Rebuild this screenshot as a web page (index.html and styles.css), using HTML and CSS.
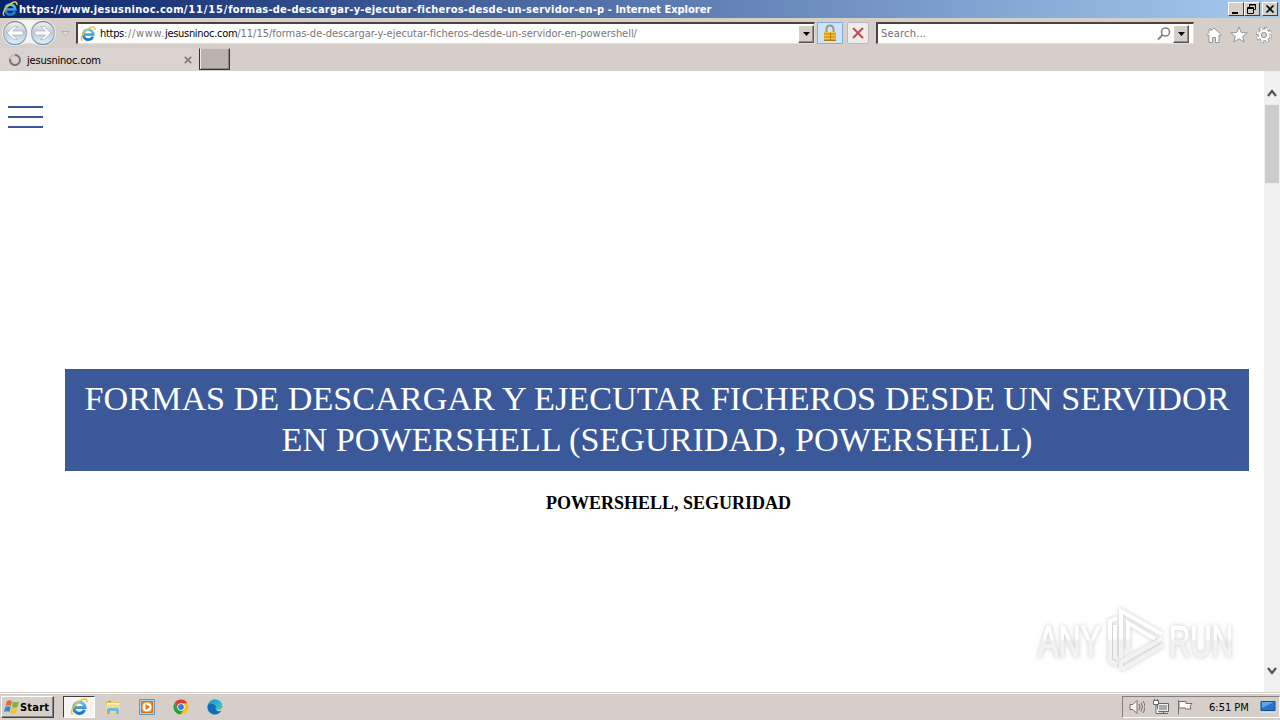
FILE: index.html
```html
<!DOCTYPE html>
<html lang="es">
<head>
    <meta charset="UTF-8">
    <title>jesusninoc.com</title>
    <link rel="stylesheet" href="styles.css">
</head>
<body>
    <svg class="defs" width="0" height="0">
        <defs>
            <linearGradient id="blue" x1="0" y1="0" x2="0" y2="1">
                <stop offset="0" stop-color="#62c5f2"/>
                <stop offset="1" stop-color="#1877c4"/>
            </linearGradient>
            <linearGradient id="ring" x1="0" y1="0" x2="0" y2="1">
                <stop offset="0" stop-color="#8b8f94"/>
                <stop offset="0.55" stop-color="#a9b6c2"/>
                <stop offset="1" stop-color="#6d9cbb"/>
            </linearGradient>
            <linearGradient id="orb" x1="0" y1="0" x2="0" y2="1">
                <stop offset="0" stop-color="#f4f4f5"/>
                <stop offset="0.5" stop-color="#bfcad6"/>
                <stop offset="1" stop-color="#e0f4fc"/>
            </linearGradient>
            <linearGradient id="edge" x1="0" y1="0" x2="1" y2="1">
                <stop offset="0" stop-color="#1c8fd0"/>
                <stop offset="0.5" stop-color="#2cb5d4"/>
                <stop offset="1" stop-color="#63d65b"/>
            </linearGradient>
            <linearGradient id="fade" gradientUnits="userSpaceOnUse" x1="0" y1="8" x2="0" y2="66">
                <stop offset="0" stop-color="#fff"/>
                <stop offset="0.5" stop-color="#fff"/>
                <stop offset="0.56" stop-color="#f1f1f1"/>
                <stop offset="1" stop-color="#f3f3f3"/>
            </linearGradient>
            <symbol id="ie" viewBox="0 0 16 16">
                <path d="M12.9 10.6A5 5 0 1 1 13.3 8.5H4" fill="none" stroke="url(#blue)" stroke-width="2.7"/>
                <path d="M2.4 14.8C-.6 12.6 3 6.5 8.2 3.1 12-.1 15.3.3 15 4" fill="none" stroke="#f1c232" stroke-width="1.4"/>
            </symbol>
        </defs>
    </svg>

    <header class="titlebar">
        <svg class="icon16" viewBox="0 0 16 16"><use href="#ie"/></svg>
        <span class="title"><span class="host">https://www.jesusninoc.com</span><span class="date">/11/15/</span><span class="slug">formas-de-descargar-y-ejecutar-ficheros-desde-un-servidor-en-p</span> - Internet Explorer</span>
        <div class="win-buttons">
            <span class="win-btn"><svg width="14" height="12"><path d="M3 9h6v2H3z"/></svg></span>
            <span class="win-btn"><svg width="14" height="12" fill="none" stroke="#000"><path d="M4.500 5V1.500h6v5H9M4 2h7M2.500 4.500h6v6h-6zM2 5.500h7"/></svg></span>
            <span class="win-btn close"><svg width="14" height="12"><path d="M3.500 2.500l7 7M10.500 2.500l-7 7" stroke="#000" stroke-width="1.700"/></svg></span>
        </div>
    </header>

    <div class="toolbar">
        <svg class="nav-buttons" width="76" height="30" viewBox="0 0 76 30">
            <path d="M15 2h28a13 13 0 0 1 0 26c-6 0-8-3-14-3s-8 3-14 3A13 13 0 0 1 15 2z" fill="#f4f4f4"/>
            <circle cx="15" cy="15" r="11.500" fill="url(#orb)" stroke="url(#ring)" stroke-width="1.400"/>
            <circle cx="43" cy="15" r="11.500" fill="url(#orb)" stroke="url(#ring)" stroke-width="1.400"/>
            <path d="M7 15l7-6.500h3.500L12.500 13H23v4H12.500l5 4.500H14z" fill="#fff" stroke="#a3b0bd" stroke-width=".7"/>
            <path d="M51 15l-7-6.500h-3.500l5 4.500H35v4h10.500l-5 4.500H44z" fill="#fff" stroke="#a3b0bd" stroke-width=".7"/>
            <path d="M61.500 13.500h8l-4 4z" fill="#e2dedb" stroke="#b4afab"/>
        </svg>
        <div class="field address">
            <svg class="icon16" viewBox="0 0 16 16"><use href="#ie"/></svg>
            <span class="url"><b>https</b><span class="www">://www.</span><b>jesusninoc.com</b><span class="path">/11/15/formas-de-descargar-y-ejecutar-ficheros-desde-un-servidor-en-powershell/</span></span>
            <span class="drop"><svg width="7" height="4"><path d="M0 0h7L3.500 4z"/></svg></span>
        </div>
        <div class="tool lock">
            <svg width="16" height="18" viewBox="0 0 16 18">
                <path d="M4.500 9V5a3.500 3.500 0 0 1 7 0v4" fill="none" stroke="#a3966c" stroke-width="2"/>
                <path d="M2 8h12v9H2z" fill="#e0a31c"/>
                <path d="M2 8.500h12M2 11.500h12M2 14.500h12" stroke="#efc440"/>
                <path d="M2 16.500h12M8.500 9v7" stroke="#b37a10"/>
            </svg>
        </div>
        <div class="tool stop">
            <svg width="12" height="12"><path d="M1 1l10 10M11 1L1 11" stroke="#c14a50" stroke-width="2"/></svg>
        </div>
        <div class="field search">
            <span class="placeholder">Search...</span>
            <svg width="14" height="14" viewBox="0 0 14 14" fill="none" stroke="#858585"><circle cx="8.500" cy="5" r="4" stroke-width="1.600"/><path d="M5.500 8L1 12.500" stroke-width="2"/></svg>
            <span class="drop"><svg width="7" height="4"><path d="M0 0h7L3.500 4z"/></svg></span>
        </div>
        <div class="commands">
            <svg width="18" height="18" viewBox="0 0 18 18"><path d="M9 2l7.500 7-1 1L14 9v7.500h-3.500v-5h-3v5H4V9l-1.500 1-1-1L4 6.500V3h2v1.700z" fill="#fff" stroke="#949494"/></svg>
            <svg width="18" height="18" viewBox="0 0 18 18"><path d="M9 1l2.300 5.500 6 .3-4.700 3.700L14.300 16 9 12.800 3.700 16l1.700-5.500L.7 6.800l6-.3z" fill="#fff" stroke="#949494"/></svg>
            <svg width="18" height="18" viewBox="0 0 18 18">
                <circle cx="9" cy="9" r="6.700" fill="none" stroke="#949494" stroke-width="3" stroke-dasharray="2.900 2.362"/>
                <circle cx="9" cy="9" r="6" fill="#fff" stroke="#949494"/>
                <circle cx="9" cy="9" r="6.500" fill="none" stroke="#fff" stroke-width="2" stroke-dasharray="1.900 3.205" stroke-dashoffset="-.5"/>
                <circle cx="9" cy="9" r="2.600" fill="#d8d2ce" stroke="#949494"/>
            </svg>
        </div>
    </div>

    <div class="tabs">
        <div class="tab">
            <svg width="14" height="14" viewBox="0 0 14 14" fill="none" stroke-width="2"><path d="M7 2a5 5 0 1 1-4.800 3.600" stroke="#777"/><path d="M2.200 5.600A5 5 0 0 1 7 2" stroke="#c4c0bd"/></svg>
            <span class="tab-title">jesusninoc.com</span>
            <svg width="8" height="8"><path d="M.8.8l6.400 6.400M7.200.8L.8 7.200" stroke="#858080" stroke-width="1.700"/></svg>
        </div>
        <div class="new-tab"></div>
    </div>

    <div class="viewport">
        <main>
            <div class="menu"><i></i><i></i><i></i></div>
            <h1>FORMAS DE DESCARGAR Y EJECUTAR FICHEROS DESDE UN SERVIDOR EN POWERSHELL (SEGURIDAD, POWERSHELL)</h1>
            <h3>POWERSHELL, SEGURIDAD</h3>
            <svg class="watermark" width="234" height="76" viewBox="0 0 234 76">
                <g class="mark">
                    <text x="8" y="56" textLength="63" lengthAdjust="spacingAndGlyphs">ANY</text>
                    <path d="M87 17l-7 3v40l7 4M85 24v34M91 57V10l41 23M98 50V22l27 16M91 61l41-23M96 66l37-22M91 61v6h5"/>
                    <text x="139" y="56" textLength="64" lengthAdjust="spacingAndGlyphs">RUN</text>
                </g>
            </svg>
        </main>
        <div class="scrollbar">
            <svg width="10" height="8"><path d="M1 7l4-5 4 5" fill="none" stroke="#555" stroke-width="2.200"/></svg>
            <div class="thumb"></div>
            <svg width="10" height="8"><path d="M1 1l4 5 4-5" fill="none" stroke="#555" stroke-width="2.200"/></svg>
        </div>
    </div>

    <footer class="taskbar">
        <div class="start">
            <svg width="16" height="16" viewBox="0 0 16 16">
                <path d="M3 2c2-1 3-1 5 0L7 7C5 6 4 6 1.500 7z" fill="#e76931"/>
                <path d="M9 2.500c2 1 4 1 6 0L13.500 8c-2 1-4 1-5.500 0z" fill="#79b843"/>
                <path d="M1.200 8c2-1 4-1 5.500 0L5.500 13c-2-1-3-1-5.500 0z" fill="#3688d0"/>
                <path d="M7.700 8.800c2 1 4 1 5.500 0L12 14c-2 1-4 1-5.500 0z" fill="#f5c12d"/>
            </svg>
            <span>Start</span>
        </div>
        <div class="launch active"><svg width="18" height="18" viewBox="0 0 16 16"><use href="#ie"/></svg></div>
        <div class="launch">
            <svg width="16" height="16" viewBox="0 0 16 16"><path d="M1 2h5l1 1h7v11H1z" fill="#e8c766"/><path d="M2 4h12v3H2z" fill="#fff0b3"/><path d="M3 2h3v1H3z" fill="#56b65a"/><path d="M1 6h14v8H1z" fill="#f3db86"/><path d="M2 15v-4q0-2 2-2h8q2 0 2 2v4h-3v-3H5v3z" fill="#72b9df"/></svg>
        </div>
        <div class="launch">
            <svg width="16" height="16" viewBox="0 0 16 16"><path d="M.5.5h15v15H.5z" fill="#b3d5ee" stroke="#5799c6"/><path d="M2.500 2.500h11v11h-11z" fill="#f28a1c" stroke="#d96d0b"/><circle cx="8" cy="8" r="4.600" fill="#fff"/><path d="M6.500 5l4.500 3-4.500 3z" fill="#e8720c"/></svg>
        </div>
        <div class="launch">
            <svg width="16" height="16" viewBox="0 0 16 16"><circle cx="8" cy="8" r="7.500" fill="#fbc116"/><path d="M1.500 4.200A7.500 7.500 0 0 1 14.500 4.300H8L4.700 9.800z" fill="#e33b2e"/><path d="M1.500 4.200A7.500 7.500 0 0 0 7.400 15.500L11.200 9.900 8 11.500 4.700 9.800z" fill="#27a04b"/><circle cx="8" cy="8" r="3.700" fill="#fff"/><circle cx="8" cy="8" r="2.900" fill="#3b78e7"/></svg>
        </div>
        <div class="launch">
            <svg width="16" height="16" viewBox="0 0 16 16"><path d="M.5 8a7.500 7.500 0 0 1 15-.5C15.500 10 13 11 10.500 10.500L8 15.500C3.500 15.500.5 12 .5 8z" fill="url(#edge)"/><path d="M.5 8C.5 5 4 4 7 5.500 9 6.500 9.300 8 8.500 9c-.5 3 3.500 4 6 2.500-2 3.500-5 4.500-8 3.900C3 14.500.5 11.500.5 8z" fill="#146bb5"/></svg>
        </div>
        <div class="tray">
            <svg width="16" height="16" viewBox="0 0 16 16" fill="none" stroke="#707070"><path d="M1 5.500h3l4-4v13l-4-4H1z" fill="#fff"/><path d="M10 5q2 3 0 6M12 3.500q3 4.500 0 9M14 2q4 6 0 12"/></svg>
            <svg width="16" height="16" viewBox="0 0 16 16" stroke="#666"><path d="M4.500 4.500h11v8h-11z" fill="#eee"/><path d="M6 6h8v5H6z" fill="#aaa" stroke="none"/><path d="M10.500 13v1.500M6 14.500h9" fill="none"/><path d="M.5 1.500h5v4h-5zM1.500 0v2M4.500 0v2M3 6v8.500h3" fill="#fff"/></svg>
            <svg width="16" height="16" viewBox="0 0 16 16" fill="#fff" stroke="#707070"><path d="M1.500 1v14.500M2 2.500h7v2h6l-2 2.500 1 3H8.500V9H2z"/></svg>
            <span class="clock">6:51 PM</span>
            <svg class="desktop" width="16" height="14" viewBox="0 0 16 14"><path d="M1 1.500h14v9H1z" fill="#2774cf" stroke="#174d91"/><path d="M2 2h12L2 8z" fill="#5aa8ee"/><path d="M1 12h14v1H1z" fill="#d7e1ec"/></svg>
        </div>
    </footer>
</body>
</html>
```
FILE: styles.css
```css
* {
    box-sizing: border-box;
}
body {
    margin: 0;
    width: 1280px;
    height: 720px;
    overflow: hidden;
    display: flex;
    flex-direction: column;
    background: #d6cfc9;
    font-family: "DejaVu Sans Condensed", "DejaVu Sans", sans-serif;
    font-size: 11px;
    color: #000;
}
svg {
    display: block;
    flex: none;
}
.defs {
    position: absolute;
}
.icon16 {
    width: 16px;
    height: 16px;
}
.titlebar {
    height: 18px;
    flex: none;
    display: flex;
    align-items: center;
    padding: 0 2px;
    background: linear-gradient(to right, #0a246a, #a6caf0);
    color: #fff;
}
.title {
    margin-left: 1px;
    font-weight: bold;
    white-space: nowrap;
}
.title .host {
    letter-spacing: 0.3px;
}
.title .date {
    letter-spacing: 0.85px;
}
.title .slug {
    letter-spacing: 0.24px;
}
.win-buttons {
    display: flex;
    margin-left: auto;
}
.win-btn {
    width: 16px;
    height: 14px;
    background: #d6cfc9;
    border: 1px solid;
    border-color: #fff #404040 #404040 #fff;
}
.win-btn.close {
    margin-left: 2px;
}
.toolbar {
    height: 30px;
    flex: none;
    display: flex;
    align-items: flex-start;
    border-top: 1px solid #d5d2c3;
}
.nav-buttons {
    margin-top: -1px;
}
.field {
    height: 22px;
    margin-top: 3px;
    display: flex;
    align-items: center;
    background: #fff;
    border: 1px solid;
    border-width: 2px 1px 1px 2px;
    border-color: #494243 #e5e0dc #e5e0dc #494243;
}
.address {
    width: 739px;
    padding-left: 2px;
}
.url {
    flex: 1;
    margin-left: 4px;
    color: #777;
    white-space: nowrap;
    letter-spacing: -0.3px;
}
.url b {
    font-weight: normal;
    color: #000;
}
.url .www {
    letter-spacing: 0.65px;
}
.url .path {
    letter-spacing: -0.03px;
}
.drop {
    width: 16px;
    height: 18px;
    display: flex;
    align-items: center;
    justify-content: center;
    background: #d6cfc9;
    border: 1px solid;
    border-color: #fff #555 #555 #fff;
    box-shadow: inset -1px -1px #96908c;
}
.tool {
    height: 22px;
    margin-top: 3px;
    display: flex;
    align-items: center;
    justify-content: center;
}
.lock {
    width: 26px;
    margin-left: 2px;
    background: #cce3fb;
    border: 1px solid #84acdd;
}
.stop {
    width: 22px;
    margin-left: 4px;
    background: #eeebeb;
    border: 1px solid #bcb8b8;
    border-radius: 2px;
}
.search {
    width: 318px;
    margin-left: 7px;
    padding-left: 3px;
    padding-right: 4px;
}
.placeholder {
    flex: 1;
    color: #707070;
    letter-spacing: 0.2px;
}
.search .drop {
    margin-left: 2px;
}
.commands {
    display: flex;
    gap: 7px;
    margin: 7px 0 0 11px;
}
.tabs {
    height: 23px;
    flex: none;
    display: flex;
}
.tab {
    width: 199px;
    display: flex;
    align-items: center;
    padding: 1px 7px 0 8px;
    background: #d9d2ce;
}
.tab-title {
    flex: 1;
    margin-left: 5px;
    letter-spacing: -0.2px;
}
.new-tab {
    width: 31px;
    height: 22px;
    background: #bbb1ad;
    border: 1px solid #333;
    border-top-color: #d6cfc9;
    box-shadow: inset 1px 0 #eee, inset -1px -1px #8c8582;
}
.viewport {
    height: 621px;
    flex: none;
    display: flex;
    background: #fff;
}
main {
    width: 1264px;
    position: relative;
    font-family: "Liberation Serif", serif;
}
.menu {
    display: flex;
    flex-direction: column;
    gap: 8px;
    padding: 35px 0 0 8px;
}
.menu i {
    width: 35px;
    height: 2px;
    background: #3b5998;
}
h1 {
    width: 1184px;
    height: 102px;
    margin: 241px 0 0 65px;
    padding: 9px 10px;
    background: #3b5998;
    color: #fff;
    font-size: 34.2px;
    font-weight: normal;
    line-height: 41px;
    text-align: center;
}
h3 {
    margin: 21px 0 0 73px;
    font-size: 18px;
    line-height: 22px;
    text-align: center;
}
.watermark {
    position: absolute;
    left: 1030px;
    top: 530px;
}
.mark {
    filter: drop-shadow(0 0 2px rgba(0, 0, 0, 0.22));
    font-family: "Liberation Sans", sans-serif;
    font-size: 44px;
    fill: url(#fade);
    stroke: url(#fade);
    stroke-width: 1.2;
}
.mark path {
    fill: none;
    stroke-width: 4;
}
.scrollbar {
    width: 16px;
    display: flex;
    flex-direction: column;
    align-items: center;
    padding: 18px 0 17px;
    background: #f0f0f0;
}
.thumb {
    width: 14px;
    height: 78px;
    margin: 8px 0 auto 0;
    background: #cdcdcd;
}
.taskbar {
    height: 28px;
    flex: none;
    display: flex;
    align-items: center;
    padding: 1px 0 0 1px;
    border-top: 1px solid #d6cfc9;
    box-shadow: inset 0 1px #fff;
}
.start {
    width: 53px;
    height: 22px;
    display: flex;
    align-items: center;
    padding-left: 2px;
    margin-right: 9px;
    border: 1px solid;
    border-color: #fff #404040 #404040 #fff;
    box-shadow: inset -1px -1px #888;
    font-weight: bold;
    letter-spacing: 0.2px;
}
.launch {
    width: 32px;
    height: 22px;
    margin-right: 2px;
    display: flex;
    align-items: center;
    justify-content: center;
}
.launch.active {
    background: #f7f5f4;
    border: 1px solid;
    border-color: #404040 #fff #fff #404040;
}
.tray {
    width: 158px;
    height: 22px;
    margin-left: auto;
    display: flex;
    align-items: center;
    gap: 8px;
    padding-left: 6px;
    border: 1px solid;
    border-color: #858080 #fff #fff #858080;
}
.clock {
    margin-left: 8px;
    white-space: nowrap;
}
.desktop {
    margin-left: 3px;
}
```
